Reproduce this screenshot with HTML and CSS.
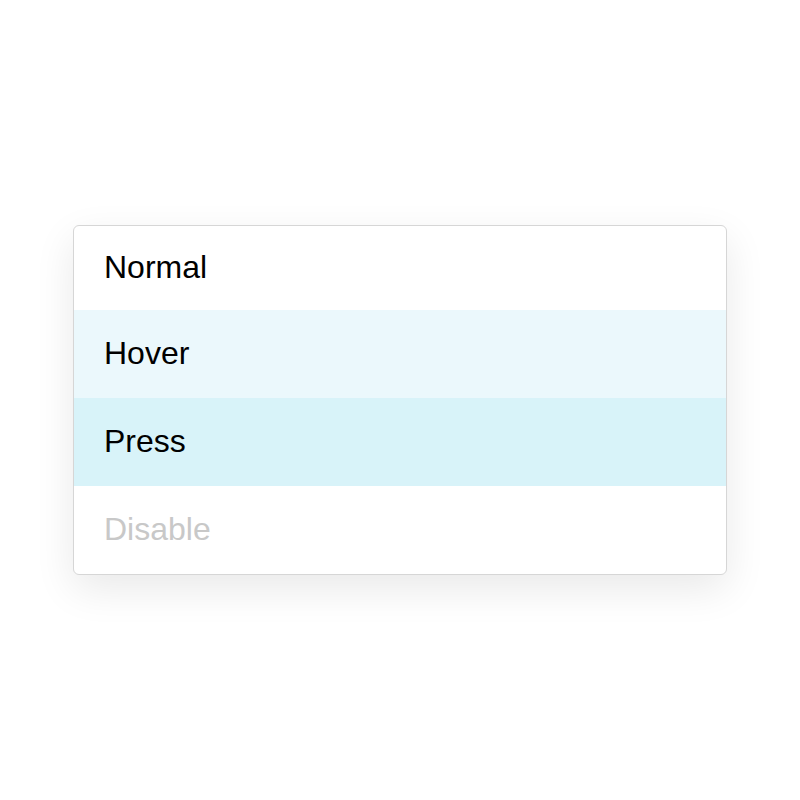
FILE: index.html
```html
<!DOCTYPE html>
<html>
<head>
<meta charset="utf-8">
<link rel="stylesheet" href="styles.css">
</head>
<body>
<div class="stage">
  <div class="menu">
    <div class="item item-normal">Normal</div>
    <div class="item item-hover">Hover</div>
    <div class="item item-press">Press</div>
    <div class="item item-disabled">Disable</div>
  </div>
</div>
</body>
</html>
```
FILE: styles.css
```css
html, body {
  margin: 0;
  padding: 0;
  background: #ffffff;
}
.stage {
  width: 800px;
  height: 800px;
  display: flex;
  align-items: center;
  justify-content: center;
}
.menu {
  width: 654px;
  height: 350px;
  box-sizing: border-box;
  border: 1px solid #d6d6d6;
  border-radius: 6px;
  background: #ffffff;
  overflow: hidden;
  display: flex;
  flex-direction: column;
  box-shadow: 0 14px 40px rgba(0, 0, 0, 0.09);
}
.item {
  height: 88px;
  box-sizing: border-box;
  padding-bottom: 2px;
  display: flex;
  align-items: center;
  padding-left: 30px;
  font-family: "Liberation Sans", Arial, sans-serif;
  font-size: 32px;
  color: #000000;
}
.item-normal {
  height: 84px;
}
.item-hover {
  background: #ebf8fc;
}
.item-press {
  background: #d8f3f9;
}
.item-disabled {
  color: #c8c8c8;
}
```
